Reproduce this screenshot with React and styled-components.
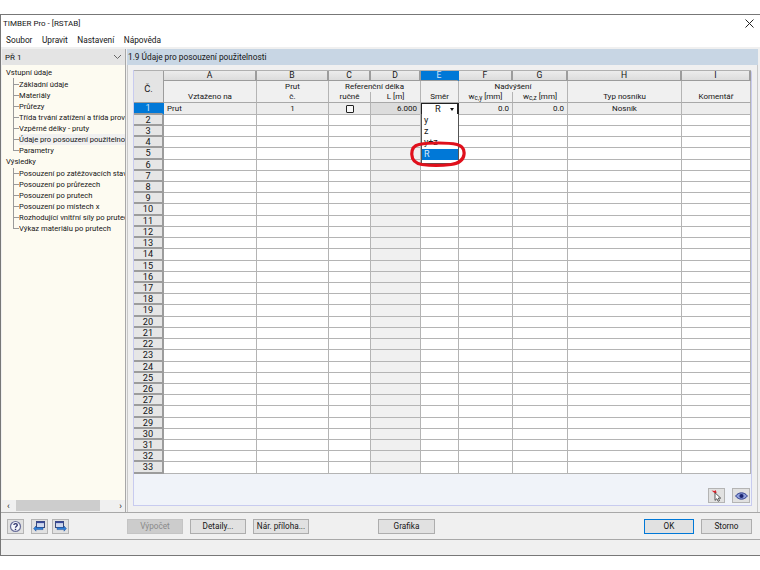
import React from 'react';
import styled, { createGlobalStyle } from 'styled-components';

const Global = createGlobalStyle`
  html, body { margin: 0; padding: 0; background: #fff; }
  body { font-family: Roboto, "Liberation Sans", Arial, sans-serif; font-size: 8px; color: #151515; }
  * { box-sizing: border-box; }
`;

const Window = styled.div`
  margin-top: 14px; width: 760px; height: 542px;
  border-top: 1px solid #777; border-bottom: 1px solid #777; border-left: 1px solid #777;
  background: #f0f0f0; display: flex; flex-direction: column;
`;
const TitleBar = styled.div`
  height: 17px; background: #fff; display: flex; align-items: center; justify-content: space-between;
  padding: 0 6px 0 2px; font-size: 8px;
`;
const MenuBar = styled.div`
  height: 15px; background: #fff; display: flex; align-items: center; gap: 9.5px; padding-left: 5px; font-size: 8.3px;
`;
const Body = styled.div`
  height: 466px; display: flex; padding-top: 2px; border-bottom: 1px solid #a8a8a8;
`;
const Sidebar = styled.div`
  width: 124px; margin-left: 1px; display: flex; flex-direction: column; border-right: 1px solid #a8a8a8;
`;
const Select = styled.div`
  height: 16px; background: #e4e4e4; display: flex; align-items: center; justify-content: space-between;
  padding: 0 3px 0 3px; font-size: 8px;
`;
const Tree = styled.div`
  flex: 1; min-height: 0; background: #fdfbf1; padding: 2.3px 0 0 4px; overflow: hidden;
  display: flex; flex-direction: column; font-size: 7.6px;
`;
const TreeTitle = styled.div`
  height: 11.15px; line-height: 11px; white-space: nowrap;
`;
const TreeGroup = styled.div`
  margin-left: 7px; display: flex; flex-direction: column;
`;
const TreeRow = styled.div`
  height: 11.15px; line-height: 11px; white-space: nowrap; display: flex; align-items: center;
  background: linear-gradient(#9a9a9a, #9a9a9a) 0 0 / 1px ${p => (p.$last ? '50%' : '100%')} no-repeat;
  &::before { content: ""; flex: 0 0 6px; height: 1px; background: #9a9a9a; }
`;
const TreeLabel = styled.span`
  background: ${p => (p.$active ? '#f0f0f0' : 'transparent')};
  flex: 1; min-width: 0; overflow: hidden;
`;
const HScroll = styled.div`
  height: 12px; margin-top: auto; margin-left: -4px; background: #f0f0f0; display: flex; align-items: center;
  justify-content: space-between; padding: 0 3px 0 5px; color: #222; position: relative; font-size: 9px;
`;
const Thumb = styled.div`
  position: absolute; left: 14px; top: 0; bottom: 1px; width: 84px; background: #cdcdcd;
`;
const Main = styled.div`
  flex: 1; display: flex; flex-direction: column; margin-left: 1px; padding-right: 3px;
`;
const Heading = styled.div`
  height: 16px; background: #c8d6e4; padding-left: 1px; display: flex; align-items: center; font-size: 8.3px;
`;
const GridFrame = styled.div`
  flex: 1; min-height: 0; border-right: 1px solid #c8c8c8; padding: 5px 5px 6px 5px; border-left: 1px solid #c8c8c8;
  display: flex;
`;
const BluePanel = styled.div`
  flex: 1; background: #f0f3f9; border: 1px solid #c8cbef; border-top: 0;
  display: flex; flex-direction: column; position: relative; border-top-right-radius: 3px;
`;
const DataGrid = styled.div`
  display: grid; position: relative;
  grid-template-columns: 30px 93px 72px 42px 50px 38px 54px 55px 114px 69px;
  grid-template-rows: 10px 11.3px 11.2px repeat(33, 11.22px);
  border-top: 1px solid #b0b0b0;
`;
const Cell = styled.div`
  border-right: 1px solid #b4b4b4; border-bottom: 1px solid #b4b4b4;
  background: ${p => p.$bg || '#fff'};
  display: flex; align-items: center; line-height: 1; overflow: visible; white-space: nowrap;
  justify-content: ${p => p.$align || 'center'};
  padding: 0 ${p => (p.$align === 'flex-end' ? '3px' : '0')} 0 ${p => (p.$align === 'flex-start' ? '3px' : '0')};
  min-width: 0; min-height: 0;
`;
const Letter = styled(Cell)`
  background: ${p => (p.$on ? '#0078d7' : 'linear-gradient(#ececec,#dcdcdc)')};
  border-right: 2px solid ${p => (p.$on ? '#0078d7' : '#9c9c9c')};
  border-bottom: 1px solid #9c9c9c; color: ${p => (p.$on ? '#cfe4f7' : '#151515')};
  font-size: 8.6px;
`;
const HeadCell = styled(Cell)`
  background: #f0f0f0;
  border-bottom: ${p => (p.$open ? '0' : '1px solid #a8a8a8')};
`;
const CornerCell = styled(Cell)`
  background: #e4e4e4; grid-row: 1 / span 3; grid-column: 1; font-size: 9.4px; border-bottom: 1px solid #9c9c9c;
  border-right: 1px solid #9c9c9c; padding-top: 4px;
`;
const RowNum = styled(Cell)`
  background: ${p => (p.$on ? '#0078d7' : '#e6e6e6')};
  color: ${p => (p.$on ? '#cfe4f7' : '#151515')};
  font-size: 9.2px;
  border-right: 2px solid ${p => (p.$on ? '#0078d7' : '#9c9c9c')}; border-bottom: 2px solid #9c9c9c;
`;
const Sub = styled.sub`
  font-size: 6.4px; vertical-align: -1px; line-height: 0;
`;
const Box = styled.span`
  width: 8px; height: 8px; border: 1.5px solid #222; border-radius: 1px; background: #f7f7f7;
`;
const Combo = styled(Cell)`
  border: 1px solid #222; border-width: 1px 2px 1px 1px; background: #fff; position: relative; justify-content: flex-start;
  padding: 0 0 0 13px; font-size: 9.2px; z-index: 2;
`;
const ComboArrow = styled.span`
  position: absolute; right: 1px; top: 1px; bottom: 1px; width: 9px; display: flex; align-items: center; justify-content: center;
  &::after { content: ""; border-left: 2.5px solid transparent; border-right: 2.5px solid transparent; border-top: 3px solid #111; }
`;
const DropList = styled.div`
  position: absolute; top: 100%; left: -1px; width: 38px; height: 50px; background: #fff; border: 1px solid #555; border-top: 0;
  padding-top: 1px; display: flex; flex-direction: column;
`;
const DropItem = styled.div`
  height: 11.3px; line-height: 11.3px; padding-left: 2px; font-size: 9px;
  background: ${p => (p.$on ? '#0078d7' : 'transparent')}; color: ${p => (p.$on ? '#dcecf9' : '#151515')};
`;
const Highlight = styled.svg`
  position: absolute; left: 276px; top: 70px; z-index: 3; pointer-events: none;
`;
const PanelTools = styled.div`
  margin-top: auto; display: flex; justify-content: flex-end; gap: 7px; padding: 0 1px 2px 0;
`;
const IconButton = styled.div`
  width: ${p => p.$w || 17}px; height: 15px; background: #e1e1e1; border: 1px solid #b4b4b4;
  display: flex; align-items: center; justify-content: center;
`;
const Footer = styled.div`
  height: 27px; display: flex; align-items: center; padding: 0 7px 0 6px; border-bottom: 1px solid #a8a8a8;
`;
const FootGroup = styled.div`
  display: flex; gap: ${p => p.$gap ?? 7}px; margin-left: ${p => p.$ml || 0}px;
`;
const Button = styled.div`
  width: ${p => p.$w || 56}px; height: 15px; display: flex; align-items: center; justify-content: center; font-size: 8.2px;
  white-space: nowrap;
  background: ${p => (p.$disabled ? '#cccccc' : '#e1e1e1')};
  color: ${p => (p.$disabled ? '#8a8a8a' : '#151515')};
  border: ${p => (p.$primary ? '1.5px solid #0078d7' : p.$disabled ? '1px solid #c4c4c4' : '1px solid #adadad')};
`;
const Status = styled.div`
  flex: 1;
`;

const cols = ['A', 'B', 'C', 'D', 'E', 'F', 'G', 'H', 'I'];
const treeA = ['Základní údaje', 'Materiály', 'Průřezy', 'Třída trvání zatížení a třída provozu', 'Vzpěrné délky - pruty', 'Údaje pro posouzení použitelnosti', 'Parametry'];
const treeB = ['Posouzení po zatěžovacích stavech', 'Posouzení po průřezech', 'Posouzení po prutech', 'Posouzení po místech x', 'Rozhodující vnitřní síly po prutech', 'Výkaz materiálu po prutech'];

const Close = () => (
  <svg width="9" height="9" viewBox="0 0 9 9"><path d="M.5.5l8 8M8.5.5l-8 8" stroke="#222" strokeWidth="1" fill="none" /></svg>
);
const Chevron = () => (
  <svg width="9" height="6" viewBox="0 0 9 6"><path d="M1 1l3.5 3.5L8 1" stroke="#666" strokeWidth="1" fill="none" /></svg>
);
const Help = () => (
  <svg width="13" height="13" viewBox="0 0 13 13">
    <circle cx="6.5" cy="6.5" r="5" fill="#f5f6fb" stroke="#6a6f9a" strokeWidth="1.2" />
    <path d="M4.8 5c.2-1.9 3.5-1.9 3.5 0 0 1.3-1.8 1.2-1.8 2.8" stroke="#2a2f6a" strokeWidth="1.3" fill="none" />
    <rect x="5.8" y="8.8" width="1.4" height="1.4" fill="#2a2f6a" />
  </svg>
);
const NavIcon = ({ flip }) => (
  <svg width="13" height="13" viewBox="0 0 13 13" style={flip ? { transform: 'scaleX(-1)' } : undefined}>
    <rect x="3.5" y="1.5" width="8" height="6" fill="#cfd8ee" stroke="#3a4a7a" />
    <rect x="3.5" y="1.5" width="8" height="1.6" fill="#3a4a9a" />
    <path d="M6 7.5H3V6L.6 8.6 3 11.2V9.6h7V7.5z" fill="#2f7fd6" stroke="#1f4f9a" strokeWidth=".5" />
  </svg>
);
const PinCursor = () => (
  <svg width="13" height="13" viewBox="0 0 13 13">
    <path d="M1.5 1.5l3 .5 1-1 1.2 2.500-1.500 1z" fill="#d8232a" />
    <path d="M5 3.8v7.6l1.9-1.7 1.2 2.6 1.4-.7-1.2-2.5h2.4z" fill="#fff" stroke="#333" strokeWidth=".8" />
  </svg>
);
const Eye = () => (
  <svg width="13" height="10" viewBox="0 0 13 10">
    <path d="M.6 5C3.5.8 9.500.8 12.400 5 9.500 9.200 3.500 9.200.6 5z" fill="#8fa0dc" stroke="#2c3a8a" />
    <circle cx="6.5" cy="5" r="2.1" fill="#1a2470" />
  </svg>
);

const dataBg = (col, row) => {
  if (col === 'D') return row === 1 ? '#dcdcdc' : '#f0f0f0';
  return row === 1 ? '#ededed' : '#fff';
};

const rowOne = { A: 'Prut', B: '1', D: '6.000', F: '0.0', G: '0.0', H: 'Nosník' };
const alignOf = { A: 'flex-start', D: 'flex-end', F: 'flex-end', G: 'flex-end' };

export default function App() {
  const rows = Array.from({ length: 33 }, (_, i) => i + 1);
  return (
    <Window>
      <Global />
      <TitleBar><span>TIMBER Pro - [RSTAB]</span><Close /></TitleBar>
      <MenuBar><span>Soubor</span><span>Upravit</span><span>Nastavení</span><span>Nápověda</span></MenuBar>
      <Body>
        <Sidebar>
          <Select><span>PŘ 1</span><Chevron /></Select>
          <Tree>
            <TreeTitle>Vstupní údaje</TreeTitle>
            <TreeGroup>
              {treeA.map((t, i) => (
                <TreeRow key={t} $last={i === treeA.length - 1}><TreeLabel $active={i === 5}>{t}</TreeLabel></TreeRow>
              ))}
            </TreeGroup>
            <TreeTitle>Výsledky</TreeTitle>
            <TreeGroup>
              {treeB.map((t, i) => (
                <TreeRow key={t} $last={i === treeB.length - 1}><TreeLabel>{t}</TreeLabel></TreeRow>
              ))}
            </TreeGroup>
            <HScroll>
              <Thumb />
              <span>‹</span><span>›</span>
            </HScroll>
          </Tree>
        </Sidebar>
        <Main>
          <Heading>1.9 Údaje pro posouzení použitelnosti</Heading>
          <GridFrame>
            <BluePanel>
              <DataGrid>
                <CornerCell>Č.</CornerCell>
                {cols.map(c => <Letter key={c} $on={c === 'E'}>{c}</Letter>)}

                <HeadCell $open />
                <HeadCell $open>Prut</HeadCell>
                <HeadCell $open style={{ gridColumn: 'span 2' }}>Referenční délka</HeadCell>
                <HeadCell $open />
                <HeadCell $open style={{ gridColumn: 'span 2' }}>Nadvýšení</HeadCell>
                <HeadCell $open />
                <HeadCell $open />

                <HeadCell>Vztaženo na</HeadCell>
                <HeadCell>č.</HeadCell>
                <HeadCell>ručně</HeadCell>
                <HeadCell>L [m]</HeadCell>
                <HeadCell>Směr</HeadCell>
                <HeadCell><span>w<Sub>c,y</Sub> [mm]</span></HeadCell>
                <HeadCell><span>w<Sub>c,z</Sub> [mm]</span></HeadCell>
                <HeadCell>Typ nosníku</HeadCell>
                <HeadCell>Komentář</HeadCell>

                {rows.map(r => (
                  <React.Fragment key={r}>
                    <RowNum $on={r === 1}>{r}</RowNum>
                    {cols.map(c => {
                      if (r === 1 && c === 'E') {
                        return (
                          <Combo key={c}>
                            R<ComboArrow />
                            <DropList>
                              <DropItem>y</DropItem>
                              <DropItem>z</DropItem>
                              <DropItem>y+z</DropItem>
                              <DropItem $on>R</DropItem>
                            </DropList>
                          </Combo>
                        );
                      }
                      return (
                        <Cell key={c} $bg={dataBg(c, r)} $align={alignOf[c]}>
                          {r === 1 && c === 'C' ? <Box /> : r === 1 ? rowOne[c] : null}
                        </Cell>
                      );
                    })}
                  </React.Fragment>
                ))}
                <Highlight width="56" height="26" viewBox="0 0 56 26">
                  <path d="M9 3.5C20 1.500 38 1.500 47 3.500c6 1.500 7.500 6 7 10-.7 6-6 9-13 10-9 1-21 1-29 0C6 22.500 2 19 1.800 13.500 1.600 8 4 4.500 9 3.500z" fill="none" stroke="#e0101c" strokeWidth="3.200" />
                </Highlight>
              </DataGrid>
              <PanelTools>
                <IconButton $w={17}><PinCursor /></IconButton>
                <IconButton $w={18}><Eye /></IconButton>
              </PanelTools>
            </BluePanel>
          </GridFrame>
        </Main>
      </Body>
      <Footer>
        <IconButton><Help /></IconButton>
        <FootGroup $ml={7} $gap={4}>
          <IconButton><NavIcon /></IconButton>
          <IconButton><NavIcon flip /></IconButton>
        </FootGroup>
        <FootGroup $ml={58}>
          <Button $disabled>Výpočet</Button>
          <Button>Detaily...</Button>
          <Button>Nár. příloha...</Button>
        </FootGroup>
        <FootGroup $ml={69}><Button $w={57}>Grafika</Button></FootGroup>
        <FootGroup $ml={209}>
          <Button $w={50} $primary>OK</Button>
          <Button $w={51}>Storno</Button>
        </FootGroup>
      </Footer>
      <Status />
    </Window>
  );
}
